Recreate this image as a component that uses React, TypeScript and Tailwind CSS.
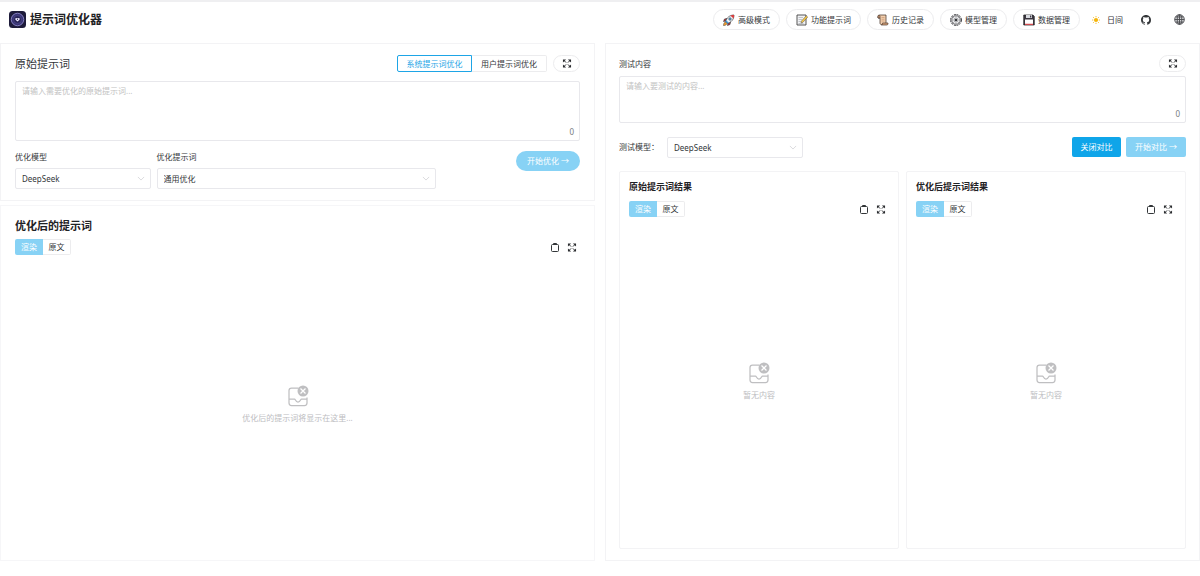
import type { ReactNode } from 'react';

const OUTLINE = 'border border-[#ececee] bg-white';

function RocketIcon() {
  return (
    <svg viewBox="0 0 24 24" className="size-3 shrink-0" aria-hidden="true">
      <path d="M8 9 3 10 1 15l5-1zM15 16l-1 5-5 2 1-5z" fill="#c0343c" stroke="#333" strokeWidth="1.2" />
      <path d="M5 16c-3 1-4 4-4 7 3 0 6-1 7-4z" fill="#f59e2b" stroke="#333" strokeWidth="1" />
      <path d="M5 15C7 8 13 2 22 2c0 9-6 15-13 17z" fill="#eef3f8" stroke="#333" strokeWidth="1.300" />
      <path d="M15 3.300C18 2 20 2 22 2c0 2 0 4-1 7z" fill="#dc3c3c" />
      <path d="m5 15 4 4 3-1-6-6z" fill="#3b9bdc" />
      <circle cx="14" cy="10" r="2.500" fill="#5bb4ea" stroke="#333" />
    </svg>
  );
}

function MemoIcon() {
  return (
    <svg viewBox="0 0 24 24" className="size-3 shrink-0" aria-hidden="true">
      <path d="M2 2h18v20H2z" fill="#f2f3f5" stroke="#444" strokeWidth="1.800" />
      <path d="M5 7h9M5 11h7M5 15h5M5 19h10" stroke="#b0b4ba" strokeWidth="1.500" />
      <path d="m10 18 1-4L20.500 3.500l3 2.500L14 16.500z" fill="#f7c744" stroke="#555" />
    </svg>
  );
}

function ScrollIcon() {
  return (
    <svg viewBox="0 0 24 24" className="size-3 shrink-0" aria-hidden="true">
      <path d="M5 2h13v19H9c-2 0-3-1-3-3V8H2V5c0-2 1-3 3-3z" fill="#f3cfae" stroke="#4a372b" strokeWidth="1.500" />
      <path d="M2 8V5c0-3 4-3 4 0v3zM9 22c2 0 2-4 2-4h11v1c0 2-1 3-3 3z" fill="#dca77d" stroke="#4a372b" strokeWidth="1.400" />
      <path d="M9 7h6M9 10.500h6M9 14h6" stroke="#c08d69" strokeWidth="1.200" />
    </svg>
  );
}

function GearIcon() {
  return (
    <svg viewBox="0 0 24 24" className="size-3 shrink-0" fill="none" stroke="#2c2c30" aria-hidden="true">
      <circle cx="12" cy="12" r="10.800" strokeWidth="2" strokeDasharray="4 1.650" />
      <circle cx="12" cy="12" r="8.500" fill="#eeeef0" strokeWidth="1.300" />
      <path d="M12 4v16M4 12h16M6.500 6.500l11 11M17.500 6.500l-11 11" stroke="#77787c" strokeWidth="1" />
      <circle cx="12" cy="12" r="2.200" fill="#2c2c30" />
    </svg>
  );
}

function FloppyIcon() {
  return (
    <svg viewBox="0 0 24 24" className="size-3 shrink-0" aria-hidden="true">
      <path d="M1.500 2H20l2.500 3v17h-21z" fill="#3c3740" stroke="#222" strokeWidth="1.500" />
      <path d="M6 2h12v6H6z" fill="#d9dbe0" />
      <path d="M14 3h2.500v4H14z" fill="#3c3740" />
      <path d="M4 11h16v10H4z" fill="#fff" />
      <path d="M4 19.500h16V22H4z" fill="#d14a4f" />
    </svg>
  );
}

function SunIcon() {
  return (
    <svg viewBox="0 0 16 16" className="size-2" aria-hidden="true">
      <circle cx="8" cy="8" r="4.200" fill="#f5b50b" />
      <path
        d="M8 0v2.500M8 13.500V16M0 8h2.500M13.500 8H16M2.300 2.300 4 4M12 12l1.700 1.700M13.700 2.300 12 4M4 12l-1.700 1.700"
        stroke="#f5b50b"
        strokeWidth="1.600"
      />
    </svg>
  );
}

function GithubIcon() {
  return (
    <svg viewBox="0 0 16 16" className="size-[10px]" fill="#333639" aria-hidden="true">
      <path d="M8 0C3.580 0 0 3.580 0 8c0 3.540 2.290 6.530 5.470 7.590.4.070.55-.17.55-.38 0-.19-.01-.82-.01-1.490-2.010.37-2.530-.49-2.690-.94-.09-.23-.48-.94-.82-1.130-.28-.15-.68-.52-.01-.53.63-.01 1.080.58 1.230.82.72 1.210 1.870.87 2.330.66.07-.52.28-.87.51-1.070-1.780-.2-3.640-.89-3.640-3.950 0-.87.31-1.590.82-2.150-.08-.2-.36-1.020.08-2.120 0 0 .67-.21 2.200.82.64-.18 1.320-.27 2-.27s1.360.09 2 .27c1.530-1.040 2.200-.82 2.200-.82.44 1.100.16 1.920.08 2.120.51.56.82 1.270.82 2.150 0 3.070-1.870 3.750-3.650 3.950.29.25.54.73.54 1.480 0 1.070-.01 1.930-.01 2.200 0 .21.15.46.55.38A8.010 8.010 0 0 0 16 8c0-4.420-3.580-8-8-8z" />
    </svg>
  );
}

function GlobeIcon() {
  return (
    <svg viewBox="0 0 24 24" className="size-[11px]" fill="none" stroke="#4a4c50" strokeWidth="2" aria-hidden="true">
      <circle cx="12" cy="12" r="10.500" fill="#d4d5d7" />
      <ellipse cx="12" cy="12" rx="5" ry="10.500" />
      <path d="M12 1.500v21M1.500 12h21M3.500 6.500h17M3.500 17.500h17" />
    </svg>
  );
}

function ExpandIcon() {
  return (
    <svg viewBox="0 0 20 20" className="h-[9px] w-[10px]" aria-hidden="true">
      <path d="M1 1h7L1 8zM19 1v7l-7-7zM1 19v-7l7 7zM19 19h-7l7-7z" fill="#2b2d30" />
      <path d="m3 3 5 5M17 3l-5 5M3 17l5-5M17 17l-5-5" stroke="#2b2d30" strokeWidth="2.200" />
    </svg>
  );
}

function ClipboardIcon() {
  return (
    <svg viewBox="0 0 16 20" className="h-[10px] w-2" fill="none" stroke="#333639" aria-hidden="true">
      <rect x="1" y="5" width="14" height="14" rx="2" strokeWidth="2" />
      <path d="M5 5V3h6v2" strokeWidth="2" />
    </svg>
  );
}

function EmptyIcon() {
  return (
    <svg viewBox="0 0 44 44" className="size-[22px]" fill="none" stroke="#bfbfc1" aria-hidden="true">
      <path d="M23 6H9a5 5 0 0 0-5 5v25a5 5 0 0 0 5 5h26a5 5 0 0 0 5-5V25" strokeWidth="2.500" />
      <path d="M4 28h11c2 0 2 6 7 6s5-6 7-6h11" strokeWidth="2.500" />
      <circle cx="32" cy="12" r="11" fill="#bfbfc1" stroke="none" />
      <path d="m27 7 10 10M37 7 27 17" stroke="#fff" strokeWidth="2.500" />
    </svg>
  );
}

function LogoIcon() {
  return (
    <svg viewBox="0 0 34 34" className="size-[17px]" fill="none" aria-hidden="true">
      <rect width="34" height="34" rx="7" fill="#1d1b3a" />
      <circle cx="17" cy="17" r="12.500" fill="#3a3575" stroke="#8a86c8" strokeWidth="1.800" />
      <circle cx="17" cy="17" r="8" fill="#2a2659" stroke="#5d58a3" />
      <path d="m17 21-4-3.500c-2-3 2-5 4-2.500 2-2.500 6-.5 4 2.500z" fill="#eeeaff" />
      <circle cx="17" cy="17" r="1.200" fill="#2a2659" />
    </svg>
  );
}

const NAV_ITEMS: { label: string; icon: ReactNode }[] = [
  { label: '高级模式', icon: <RocketIcon /> },
  { label: '功能提示词', icon: <MemoIcon /> },
  { label: '历史记录', icon: <ScrollIcon /> },
  { label: '模型管理', icon: <GearIcon /> },
  { label: '数据管理', icon: <FloppyIcon /> },
];

function ExpandButton() {
  return (
    <button type="button" aria-label="全屏" className={`flex h-[17px] w-[27px] items-center justify-center rounded-full ${OUTLINE}`}>
      <ExpandIcon />
    </button>
  );
}

function SelectBox({ id, value, className }: { id: string; value: string; className: string }) {
  return (
    <div className={`relative ${className}`}>
      <select id={id} className="h-[21px] w-full appearance-none rounded-xs border border-[#e8e8ec] bg-white px-1.5 text-[8px]">
        <option>{value}</option>
      </select>
      <svg viewBox="0 0 12 8" className="pointer-events-none absolute top-2 right-1.5 h-[5px] w-2" fill="none" stroke="#cfcfd3" strokeWidth="1.200" aria-hidden="true">
        <path d="m1 1.500 5 5 5-5" />
      </svg>
    </div>
  );
}

function PromptInput({ id, placeholder, className }: { id: string; placeholder: string; className: string }) {
  return (
    <div className="relative">
      <textarea
        id={id}
        placeholder={placeholder}
        className={`block w-full resize-none rounded-xs border border-[#e8e8ec] px-1.5 py-[3px] text-[8px] leading-[12px] placeholder:text-[#c2c2c2] ${className}`}
      />
      <span className="absolute right-1.5 bottom-1 text-[8px] leading-[10px] text-[#767c82]">0</span>
    </div>
  );
}

function ResultView({ title, titleClass, emptyText }: { title: string; titleClass: string; emptyText: string }) {
  return (
    <>
      <h2 className={`font-bold text-[#1f2225] ${titleClass}`}>{title}</h2>
      <div className="flex items-center justify-between">
        <div className="flex h-4 text-[8px]">
          <button type="button" className="w-7 rounded-l-xs bg-[#87d2f5] text-white">渲染</button>
          <button type="button" className="w-7 rounded-r-xs border border-l-0 border-[#ececee]">原文</button>
        </div>
        <div className="flex items-center gap-2 pr-[3px]">
          <button type="button" aria-label="复制"><ClipboardIcon /></button>
          <button type="button" aria-label="全屏"><ExpandIcon /></button>
        </div>
      </div>
      <div className="flex flex-1 flex-col items-center justify-center gap-[5px] pb-0.5 text-[8px] leading-[12px] text-[#bdbdbf]">
        <EmptyIcon />
        <p>{emptyText}</p>
      </div>
    </>
  );
}

export default function App() {
  return (
    <div className="flex min-h-screen flex-col border-t-2 border-[#efeff1] bg-white pb-[15px] font-['Noto_Sans','Noto_Sans_CJK_SC',sans-serif] text-[8px] text-[#333639]">
      <header className="flex h-[41px] shrink-0 items-center justify-between pr-[15px] pb-[6px] pl-[9px]">
        <div className="flex items-center gap-1">
          <LogoIcon />
          <h1 className="text-[12px] font-bold text-[#1f2225]">提示词优化器</h1>
        </div>
        <nav className="flex items-center gap-1.5">
          {NAV_ITEMS.map((item) => (
            <button key={item.label} type="button" className={`flex h-[21px] items-center gap-[3px] rounded-full px-[9px] ${OUTLINE}`}>
              {item.icon}
              {item.label}
            </button>
          ))}
          <button type="button" className="flex items-center gap-[7px] pl-1.5">
            <SunIcon />
            日间
          </button>
          <a href="#github" aria-label="GitHub" className="pl-3"><GithubIcon /></a>
          <button type="button" aria-label="语言" className="pl-[17px]"><GlobeIcon /></button>
        </nav>
      </header>

      <main className="grid flex-1 grid-cols-2 gap-[10px]">
        <div className="flex flex-col gap-1">
          <section className="border border-[#f3f3f5] px-[14px] py-[11px]">
            <div className="mb-[9px] flex items-center justify-between">
              <label htmlFor="prompt" className="text-[11px] leading-[17px]">原始提示词</label>
              <div className="flex items-center gap-1.5">
                <div className="flex h-[17px]">
                  <button type="button" className="w-[75px] rounded-l-xs border border-[#1ea5e6] text-[#1ea5e6]">系统提示词优化</button>
                  <button type="button" className="w-[75px] rounded-r-xs border border-l-0 border-[#ececee]">用户提示词优化</button>
                </div>
                <ExpandButton />
              </div>
            </div>
            <PromptInput id="prompt" placeholder="请输入需要优化的原始提示词..." className="h-[60px]" />
            <div className="flex items-start gap-1.5 pt-[10px]">
              <div className="w-[24%]">
                <label htmlFor="model" className="mb-[5px] block leading-[12px]">优化模型</label>
                <SelectBox id="model" value="DeepSeek" className="w-full" />
              </div>
              <div className="w-[49.5%]">
                <label htmlFor="template" className="mb-[5px] block leading-[12px]">优化提示词</label>
                <SelectBox id="template" value="通用优化" className="w-full" />
              </div>
              <button type="button" className="ml-auto h-5 w-16 shrink-0 rounded-full bg-[#87d2f5] text-white">开始优化 →</button>
            </div>
          </section>

          <section className="flex flex-1 flex-col border border-[#f6f6f8] px-[14px] pt-3 pb-1">
            <ResultView title="优化后的提示词" titleClass="mb-[5px] text-[11px] leading-[16px]" emptyText="优化后的提示词将显示在这里..." />
          </section>
        </div>

        <section className="flex flex-col border border-[#f3f3f5] px-[13px] py-[11px]">
          <div className="mb-1 flex items-center justify-between">
            <label htmlFor="test">测试内容</label>
            <ExpandButton />
          </div>
          <PromptInput id="test" placeholder="请输入要测试的内容..." className="h-[47px]" />
          <div className="mt-[14px] mb-[13px] flex items-start">
            <label htmlFor="test-model" className="w-12 leading-[20px]">测试模型：</label>
            <SelectBox id="test-model" value="DeepSeek" className="w-[24%]" />
            <div className="ml-auto flex gap-[5px] text-white">
              <button type="button" className="h-5 w-[49px] rounded-xs bg-[#0fa5e9]">关闭对比</button>
              <button type="button" className="h-5 w-[60px] rounded-xs bg-[#87d2f5]">开始对比 →</button>
            </div>
          </div>
          <div className="grid flex-1 grid-cols-2 gap-[7px]">
            <section className="flex flex-col rounded-xs border border-[#f3f3f5] px-[9px] pt-2">
              <ResultView title="原始提示词结果" titleClass="mb-[7px] text-[9px] leading-[14px]" emptyText="暂无内容" />
            </section>
            <section className="flex flex-col rounded-xs border border-[#f3f3f5] px-[9px] pt-2">
              <ResultView title="优化后提示词结果" titleClass="mb-[7px] text-[9px] leading-[14px]" emptyText="暂无内容" />
            </section>
          </div>
        </section>
      </main>
    </div>
  );
}
